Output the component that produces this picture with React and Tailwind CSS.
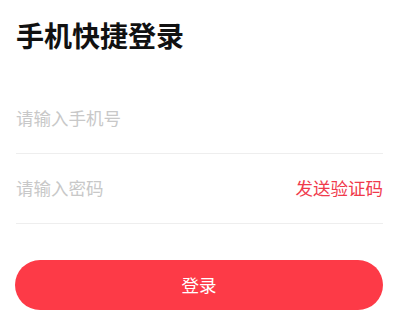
import React from "react";

export default function App() {
  return (
    <div
      className="w-[405px] h-[317px] bg-white px-[16px] pt-[18px]"
      style={{ fontFamily: '"Noto Sans CJK SC", "Noto Sans", sans-serif' }}
    >
      <h1 className="text-[28px] leading-[34px] font-bold text-[#111111]">手机快捷登录</h1>
      <div className="mt-[32px] flex items-center h-[70px] border-b border-[#eeeeee] w-[367px]">
        <input
          className="flex-1 text-[17.5px] outline-none placeholder:text-[#c8c8c8] text-[#222]"
          placeholder="请输入手机号"
        />
      </div>
      <div className="flex items-center h-[70px] border-b border-[#eeeeee] w-[367px]">
        <input
          className="flex-1 min-w-0 text-[17.5px] outline-none placeholder:text-[#c8c8c8] text-[#222]"
          placeholder="请输入密码"
        />
        <span className="text-[17.5px] text-[#f03a4c]">发送验证码</span>
      </div>
      <button className="mt-[36px] w-[368px] h-[50px] -ml-px rounded-full bg-[#fd3a47] text-white text-[17.5px]">
        登录
      </button>
    </div>
  );
}
